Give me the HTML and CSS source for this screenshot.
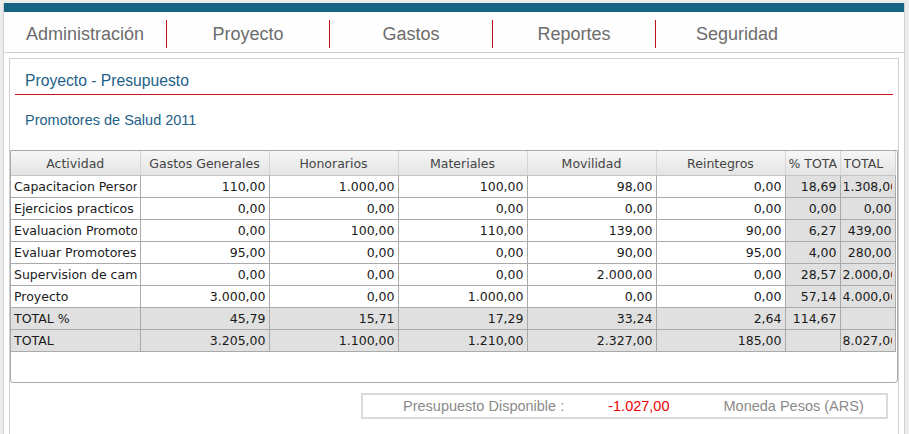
FILE: index.html
```html
<!DOCTYPE html>
<html lang="es">
<head>
<meta charset="utf-8">
<title>Proyecto - Presupuesto</title>
<link rel="stylesheet" href="styles.css">
</head>
<body>
<div class="app">
  <div class="topbar"></div>
  <nav class="menu">
    <div class="menu-item">Administración</div>
    <div class="menu-item">Proyecto</div>
    <div class="menu-item">Gastos</div>
    <div class="menu-item">Reportes</div>
    <div class="menu-item last">Seguridad</div>
  </nav>
  <section class="panel">
    <h1 class="panel-title">Proyecto - Presupuesto</h1>
    <h2 class="subtitle">Promotores de Salud 2011</h2>
    <div class="grid">
      <table class="budget">
        <colgroup>
          <col class="c-act"><col class="c-num"><col class="c-num"><col class="c-num"><col class="c-num"><col class="c-num"><col class="c-pct"><col class="c-tot">
        </colgroup>
        <thead>
          <tr>
            <th><div class="clip">Actividad</div></th>
            <th><div class="clip">Gastos Generales</div></th>
            <th><div class="clip">Honorarios</div></th>
            <th><div class="clip">Materiales</div></th>
            <th><div class="clip">Movilidad</div></th>
            <th><div class="clip">Reintegros</div></th>
            <th><div class="clip left">% TOTAL</div></th>
            <th><div class="clip left">TOTAL</div></th>
          </tr>
        </thead>
        <tbody>
          <tr><td class="name"><div class="clip">Capacitacion Personal</div></td><td>110,00</td><td>1.000,00</td><td>100,00</td><td>98,00</td><td>0,00</td><td class="shade">18,69</td><td class="shade"><div class="clip left">1.308,00</div></td></tr>
          <tr><td class="name"><div class="clip">Ejercicios practicos</div></td><td>0,00</td><td>0,00</td><td>0,00</td><td>0,00</td><td>0,00</td><td class="shade">0,00</td><td class="shade">0,00</td></tr>
          <tr><td class="name"><div class="clip">Evaluacion Promotores</div></td><td>0,00</td><td>100,00</td><td>110,00</td><td>139,00</td><td>90,00</td><td class="shade">6,27</td><td class="shade">439,00</td></tr>
          <tr><td class="name"><div class="clip">Evaluar Promotores</div></td><td>95,00</td><td>0,00</td><td>0,00</td><td>90,00</td><td>95,00</td><td class="shade">4,00</td><td class="shade">280,00</td></tr>
          <tr><td class="name"><div class="clip">Supervision de campo</div></td><td>0,00</td><td>0,00</td><td>0,00</td><td>2.000,00</td><td>0,00</td><td class="shade">28,57</td><td class="shade"><div class="clip left">2.000,00</div></td></tr>
          <tr><td class="name"><div class="clip">Proyecto</div></td><td>3.000,00</td><td>0,00</td><td>1.000,00</td><td>0,00</td><td>0,00</td><td class="shade">57,14</td><td class="shade"><div class="clip left">4.000,00</div></td></tr>
          <tr class="sum"><td class="name">TOTAL %</td><td>45,79</td><td>15,71</td><td>17,29</td><td>33,24</td><td>2,64</td><td>114,67</td><td></td></tr>
          <tr class="sum"><td class="name">TOTAL</td><td>3.205,00</td><td>1.100,00</td><td>1.210,00</td><td>2.327,00</td><td>185,00</td><td></td><td><div class="clip left">8.027,00</div></td></tr>
        </tbody>
      </table>
    </div>
    <div class="summary">
      <span class="sum-label">Presupuesto Disponible :</span>
      <span class="sum-value">-1.027,00</span>
      <span class="sum-currency">Moneda Pesos (ARS)</span>
    </div>
  </section>
</div>
</body>
</html>
```
FILE: styles.css
```css
html, body {
  margin: 0;
  padding: 0;
  background: #ececec;
  height: 100%;
  overflow: hidden;
}
body {
  padding-top: 3px;
  font-family: "Liberation Sans", Arial, sans-serif;
}
.app {
  margin-left: 3px;
  width: 900px;
  border-left: 1px solid #cfcfcf;
  border-right: 1px solid #cfcfcf;
  background: #fff;
  height: 600px;
}
.topbar {
  height: 9px;
  background: #156482;
}
.menu {
  display: flex;
  align-items: center;
  height: 40px;
  border-bottom: 1px solid #cfcfcf;
  background: #fefefe;
}
.menu-item {
  width: 162px;
  height: 28px;
  line-height: 28px;
  margin-top: 4px;
  border-right: 1px solid #c0101a;
  text-align: center;
  font-size: 18px;
  color: #6c6c6c;
}
.menu-item.last {
  border-right-color: transparent;
}
.panel {
  margin: 5px 5px 0 5px;
  border: 1px solid #cfcfcf;
  height: 500px;
}
.panel-title {
  margin: 0 5px;
  padding: 12px 0 3px 10px;
  font-size: 15.7px;
  line-height: 20px;
  font-weight: normal;
  color: #1e5f88;
  border-bottom: 1px solid #c8101e;
}
.subtitle {
  margin: 15px 0 0 15px;
  font-size: 14.5px;
  line-height: 20px;
  font-weight: normal;
  color: #1e5f88;
}
.grid {
  margin: 20px 0 0 0;
  height: 231px;
  border: 1px solid #a9a9a9;
  border-radius: 0 0 3px 3px;
  overflow: hidden;
  background: #fff;
}
.budget {
  border-collapse: collapse;
  table-layout: fixed;
  width: 884px;
  font-family: "DejaVu Sans", Verdana, sans-serif;
  font-size: 12.5px;
}
.c-act { width: 129px; }
.c-num { width: 129px; }
.c-pct { width: 55px; }
.c-tot { width: 55px; }
.budget th {
  height: 24px;
  padding: 0 3px;
  font-weight: normal;
  color: #444;
  background: linear-gradient(#f6f6f6, #e4e4e4);
  border-right: 1px solid #d4d4d4;
  border-bottom: 1px solid #c4c4c4;
  text-align: center;
}
.budget td {
  height: 21px;
  padding: 0 3px 0 2px;
  text-align: right;
  color: #1a1a1a;
  border: 1px solid #aaaaaa;
  border-top: none;
  white-space: nowrap;
}
.budget td:first-child { border-left: none; }
.budget td.name { text-align: left; padding-left: 3px; }
.budget td.shade { background: #e0e0e0; }
.budget tr.sum td { background: #e0e0e0; }
.clip {
  overflow: hidden;
  white-space: nowrap;
}
.clip.left { text-align: left; }
.summary {
  display: flex;
  align-items: center;
  margin: 10px 10px 0 auto;
  width: 523px;
  height: 22px;
  border: 2px solid #dadada;
  font-size: 14.5px;
  color: #8a8a8a;
}
.sum-label { margin-left: 40px; }
.sum-value { margin-left: 44px; color: #f00000; }
.sum-currency { margin-left: 54px; }
```
